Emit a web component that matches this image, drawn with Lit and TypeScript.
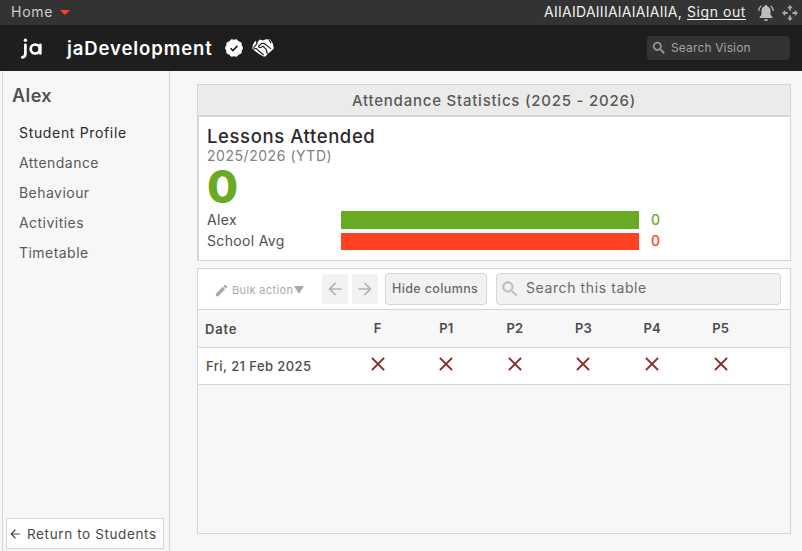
import { LitElement, html, svg, css } from "lit";
import { customElement, state } from "lit/decorators.js";

const logo = html`<svg class="logo" viewBox="0 0 22 22" role="img" aria-label="ja">
  <g fill="none" stroke="#fff" stroke-width="2.700" stroke-linecap="round">
    <path d="M4.400 6.800V15.500Q4.400 19.300 1.300 19.300"/>
    <circle cx="14.200" cy="11" r="4.500"/>
    <path d="M19.300 6.800V15.400"/>
  </g>
  <circle cx="4.400" cy="2.200" r="1.700" fill="#fff"/>
</svg>`;

const searchIcon = html`<svg class="icon" viewBox="0 0 24 24"><path fill="currentColor" stroke="currentColor" stroke-width=".5" d="M15.5 14h-.8l-.3-.3A6.5 6.5 0 1 0 13.700 14.400l.3.300v.8l5 5 1.500-1.500zM9.500 14a4.500 4.500 0 1 1 0-9 4.500 4.500 0 0 1 0 9z"/></svg>`;

const arrowIcon = (dir: "left" | "right") => html`<svg class="icon ${dir}" viewBox="0 0 24 24"><path fill="currentColor" d="M20 11H7.830l5.590-5.590L12 4l-8 8 8 8 1.410-1.410L7.830 13H20z"/></svg>`;

const verifiedIcon = () => {
  const points = Array.from({ length: 20 }, (_, i) => {
    const r = i % 2 ? 8.900 : 7.900;
    const a = (i * Math.PI) / 10;
    return `${(9 + r * Math.sin(a)).toFixed(2)},${(9 - r * Math.cos(a)).toFixed(2)}`;
  }).join(" ");
  return html`<svg class="verified" viewBox="0 0 18 18">
    <polygon points=${points} fill="#fff" stroke="#fff" stroke-width=".6" stroke-linejoin="round"/>
    <path d="M5.600 9.200l2.300 2.300 4.500-4.600" fill="none" stroke="#1e1e1e" stroke-width="1.600"/>
  </svg>`;
};

const handshakeIcon = html`<svg class="handshake" viewBox="0 0 22 18">
  <path fill="#fff" d="M3.500 1.500 5.200 3.500 7.800 .6 11 1.400 13.800 .3 17 .6 17.800 0 20.800 4.500 21.800 9.500 19 12.300 15.800 14.800 13.600 17.500 11.500 17.500 7 15 3 12 .2 9.500 1 5.500z"/>
  <path d="M3.900 1 5.100 4.400 1.500 9M17 .4 19 4.300M6.300 7.500 9.800 4.300 12.500 4.600 19 9.900M6 7.700 8.300 8.700 11 7.300 14.200 10.300 15.300 14.800M1 10 4.500 9.500 7 12 9.500 14.200 11.800 16" fill="none" stroke="#1e1e1e" stroke-width="1.150"/>
</svg>`;

const bellIcon = html`<svg class="bell" viewBox="0 0 16 18">
  <path fill="#bdbdbd" d="M8 1c.8 0 1.200.500 1.200 1.200 2.200.6 3.300 2.400 3.300 4.600v4l1.900 2.300v1H1.600v-1l1.900-2.300v-4c0-2.200 1.100-4 3.300-4.600C6.800 1.500 7.200 1 8 1zM6.100 15.200h3.800a1.900 1.900 0 0 1-3.800 0z"/>
  <path fill="none" stroke="#bdbdbd" stroke-width="1.100" d="M3.300 1.800C1.700 3 .8 4.700.7 7M12.700 1.800c1.600 1.200 2.500 2.900 2.600 5.200"/>
</svg>`;

const moveIcon = html`<svg class="move" viewBox="0 0 16 16">
  ${[0, 90, 180, 270].map(
    (r) => svg`<path fill="#a9a9a9" transform="rotate(${r} 8 8)" d="M8 0l2.900 3.200H8.900v2.300H7.100V3.200H5.100z"/>`,
  )}
</svg>`;

const pencilIcon = html`<svg class="pencil" viewBox="0 0 24 24"><path fill="currentColor" d="M3 17.250V21h3.750L17.810 9.940l-3.750-3.750L3 17.250zM20.710 7.040a1 1 0 0 0 0-1.410l-2.340-2.340a1 1 0 0 0-1.410 0l-1.830 1.830 3.750 3.750 1.830-1.830z"/></svg>`;

const crossIcon = html`<svg class="cross" viewBox="0 0 14 14"><path d="M.9.900l12.200 12.200M13.100.900L.9 13.100" fill="none" stroke="#8c2a2a" stroke-width="2"/></svg>`;

@customElement("app-root")
export class AppRoot extends LitElement {
  @state() private active = "Student Profile";

  private nav = ["Student Profile", "Attendance", "Behaviour", "Activities", "Timetable"];
  private periods = ["F", "P1", "P2", "P3", "P4", "P5"];

  static styles = css`
    * { box-sizing: border-box; }
    :host {
      display: flex; flex-direction: column; width: 802px; height: 551px; overflow: hidden;
      background: #f7f7f7; color: #505050;
      font: 400 14px/20px Inter, "Liberation Sans", sans-serif; white-space: nowrap;
    }
    svg { display: block; flex: none; }
    button { font: inherit; color: inherit; margin: 0; padding: 0; border: 0; background: none; }

    .top { height: 25px; flex: none; background: #333; display: flex; align-items: center; padding: 0 4px 2px 11px; }
    .home { color: #d3cbc6; letter-spacing: .75px; }
    .caret { width: 0; height: 0; border: 5px solid transparent; border-top: 5px solid #ff4120; border-bottom: 0; margin: 2px 0 0 7px; }
    .user { margin-left: auto; color: #f0f0f0; letter-spacing: .27px; }
    .signout { color: #f0f0f0; letter-spacing: .57px; margin-left: 5px; text-decoration: none; border-bottom: 1px solid #f5f5f5; line-height: 15px; margin-top: 1px; }
    .bell { width: 16px; height: 18px; margin: 3px 0 0 12px; }
    .move { width: 16px; height: 16px; margin: 3px 0 0 8px; }

    .brand { height: 46px; flex: none; background: #1e1e1e; display: flex; align-items: center; padding: 0 12px 0 21px; color: #fff; }
    .logo { width: 22px; height: 22px; margin: 1px 24px 0 0; }
    .name { font-size: 18.5px; font-weight: 600; letter-spacing: .9px; width: 158px; }
    .verified { width: 18px; height: 18px; }
    .handshake { width: 22px; height: 18px; margin-left: 9px; }
    .vision { margin-left: auto; width: 143px; height: 24px; border-radius: 4px; background: #333; color: #a3a3a3; display: flex; align-items: center; padding-left: 4px; font-size: 12px; letter-spacing: .14px; }
    .vision .icon { width: 16px; height: 16px; margin-right: 4px; }

    .body { flex: 1; min-height: 0; display: flex; padding-left: 2px; }
    .side { width: 168px; flex: none; border: solid #d5d5d5; border-width: 0 1px; display: flex; flex-direction: column; padding: 15px 5px 2px 3px; }
    .who { margin: 0 0 12px 6px; font-size: 18px; font-weight: 600; letter-spacing: .42px; color: #505050; }
    .item { height: 30px; line-height: 30px; padding-left: 13px; letter-spacing: .46px; color: #595959; }
    .item.active { color: #2c2a28; letter-spacing: .66px; }
    .return { margin-top: auto; height: 31px; border: 1px solid #d5d5d5; background: #fff; display: flex; align-items: center; padding: 0 0 0 1px; font-size: 13.5px; letter-spacing: .62px; color: #484848; }
    .return .icon { width: 14px; height: 14px; margin-right: 5px; }

    .main { flex: 1; min-width: 0; padding: 13px 11px 17px 27px; display: flex; flex-direction: column; gap: 7px; }
    .card { border: 1px solid #d5d5d5; background: #fff; }
    .stats { height: 177px; flex: none; }
    .title { height: 32px; background: #ebebea; border-bottom: 2px solid #d5d5d5; text-align: center; line-height: 31px; font-size: 15px; font-weight: 500; letter-spacing: .77px; color: #595959; }
    .content { height: 143px; border-left: 1px solid #d5d5d5; padding: 9px 0 0 8px; display: flex; flex-direction: column; }
    .heading { font-size: 18.5px; font-weight: 500; letter-spacing: .6px; color: #2c2a28; }
    .sub { color: #808080; letter-spacing: .54px; }
    .big { font-size: 45px; font-weight: 800; line-height: 42px; height: 45px; color: #69aa23; }
    .stat { display: grid; grid-template: 18px / 134px 298px 1fr; line-height: 18px; margin-bottom: 4px; letter-spacing: .34px; }
    .stat.avg { grid-template-rows: 17px; line-height: 16px; }
    .bar { background: #69aa23; }
    .avg .bar { background: #ff4120; }
    .value { color: #69aa23; font-weight: 500; padding-left: 12px; }
    .avg .value { color: #ff4120; }

    .grid { flex: 1; background: #f7f7f7; }
    .tools { height: 41px; background: #fff; border-bottom: 1px solid #d5d5d5; display: flex; align-items: center; padding-left: 16px; }
    .bulk { display: flex; align-items: center; width: 108px; color: #a9a9a9; font-size: 11px; letter-spacing: .36px; padding-top: 2px; }
    .pencil { width: 15px; height: 15px; margin-right: 3px; }
    .down { width: 0; height: 0; border: 5px solid transparent; border-top: 8px solid #a9a9a9; border-bottom: 0; margin-left: 1px; }
    .step { width: 26px; height: 30px; border-radius: 3px; background: #f2f2f2; color: #b5b5b5; display: grid; place-items: center; margin-right: 4px; }
    .step .icon { width: 20px; height: 20px; }
    .right { transform: scaleX(-1); }
    .field { height: 32px; border: 1px solid #d5d5d5; border-radius: 4px; background: #f2f2f2; display: flex; align-items: center; }
    .hide { width: 102px; margin: 0 9px 0 3px; padding-left: 6px; font-size: 12.5px; font-weight: 500; letter-spacing: .38px; color: #6a6a6a; }
    .find { width: 285px; padding: 0 0 2px 3px; letter-spacing: .6px; color: #6a6a6a; }
    .find .icon { width: 20px; height: 20px; margin: 2px 6px 0 0; color: #bdbdbd; }
    .row { display: grid; grid-template-columns: 145.400px repeat(6, 68.600px); border-bottom: 1px solid #d5d5d5; font-size: 13px; color: #4c4c4c; align-items: center; }
    .head { height: 38px; font-weight: 600; }
    .rec { height: 37px; background: #fff; font-weight: 500; }
    .head .date { padding: 1px 0 0 7px; letter-spacing: .8px; }
    .rec .date { padding: 0 0 0 8px; letter-spacing: .42px; }
    .period { text-align: center; letter-spacing: .16px; padding-bottom: 2px; }
    .rec .period { display: grid; justify-content: center; padding-bottom: 5px; }
    .cross { width: 14px; height: 14px; }
  `;

  render() {
    return html`
      <header class="top">
        <span class="home">Home</span><i class="caret"></i>
        <span class="user">AIIAIDAIIIAIAIAIAIIA,</span>
        <a class="signout">Sign out</a>${bellIcon}${moveIcon}
      </header>
      <div class="brand">
        ${logo}<span class="name">jaDevelopment</span>${verifiedIcon()}${handshakeIcon}
        <div class="vision">${searchIcon}<span>Search Vision</span></div>
      </div>
      <div class="body">
        <nav class="side">
          <h2 class="who">Alex</h2>
          ${this.nav.map((n) => html`<div class="item ${n === this.active ? "active" : ""}" @click=${() => (this.active = n)}>${n}</div>`)}
          <button class="return">${arrowIcon("left")}<span>Return to Students</span></button>
        </nav>
        <main class="main">
          <section class="card stats">
            <div class="title">Attendance Statistics (2025 - 2026)</div>
            <div class="content">
              <div class="heading">Lessons Attended</div>
              <div class="sub">2025/2026 (YTD)</div>
              <div class="big">0</div>
              <div class="stat"><span>Alex</span><span class="bar"></span><span class="value">0</span></div>
              <div class="stat avg"><span>School Avg</span><span class="bar"></span><span class="value">0</span></div>
            </div>
          </section>
          <section class="card grid">
            <div class="tools">
              <div class="bulk">${pencilIcon}<span>Bulk action</span><i class="down"></i></div>
              <button class="step">${arrowIcon("left")}</button>
              <button class="step">${arrowIcon("right")}</button>
              <button class="field hide">Hide columns</button>
              <div class="field find">${searchIcon}<span>Search this table</span></div>
            </div>
            <div class="row head"><span class="date">Date</span>${this.periods.map((p) => html`<span class="period">${p}</span>`)}</div>
            <div class="row rec"><span class="date">Fri, 21 Feb 2025</span>${this.periods.map(() => html`<span class="period">${crossIcon}</span>`)}</div>
          </section>
        </main>
      </div>
    `;
  }
}
